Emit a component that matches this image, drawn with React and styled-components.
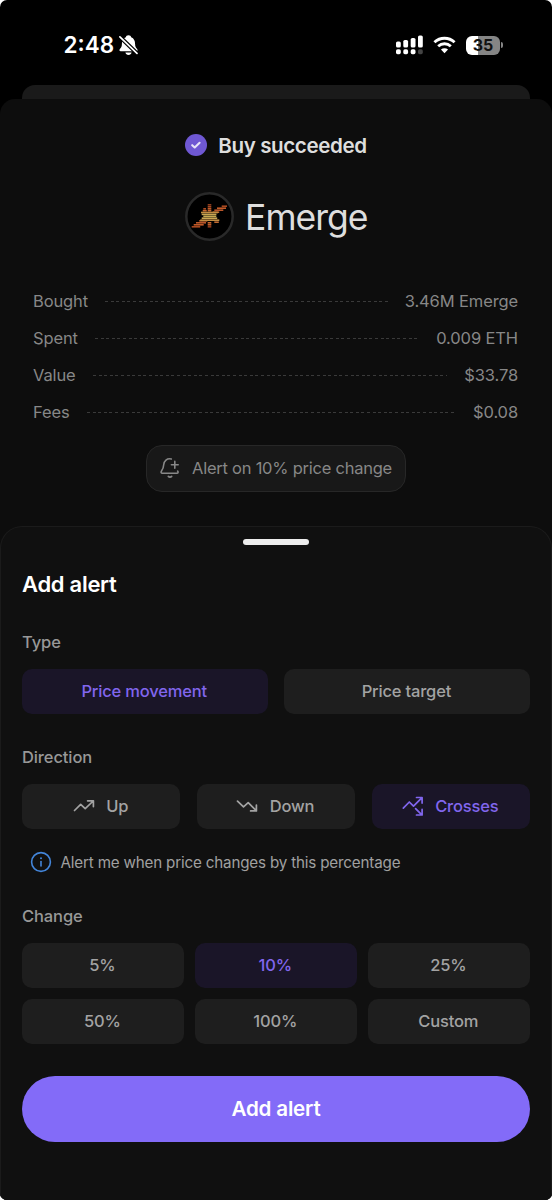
import React from "react";
import styled, { createGlobalStyle } from "styled-components";

const GlobalStyle = createGlobalStyle`
  *, *::before, *::after { box-sizing: border-box; }
  body { margin: 0; background: #fff; font-family: Inter, "Liberation Sans", sans-serif; }
  button { font: inherit; border: 0; padding: 0; margin: 0; }
  svg { display: block; flex: none; }
`;

const Screen = styled.div`
  width: 552px;
  height: 1200px;
  display: flex;
  flex-direction: column;
  overflow: hidden;
  background: #000;
  border-radius: 7px;
`;

const StatusBar = styled.header`
  height: 85px;
  flex: none;
  display: flex;
  justify-content: space-between;
  align-items: center;
  padding: 5px 49px 0 63.5px;
  color: #fff;
`;

const StatusGroup = styled.div`
  display: flex;
  align-items: center;
  gap: ${(p) => p.$gap}px;
`;

const Clock = styled.span`
  font-size: 22.5px;
  font-weight: 600;
  line-height: 28px;
`;

const Battery = styled.span`
  display: flex;
  align-items: center;
  gap: 1px;
`;

const BatteryBody = styled.span`
  width: 34px;
  height: 19px;
  border-radius: 6px;
  background: linear-gradient(90deg, #fff 35%, #858585 35%);
  color: #111;
  font-size: 16px;
  font-weight: 650;
  line-height: 19px;
  text-align: center;
`;

const BatteryTip = styled.span`
  width: 2px;
  height: 6px;
  border-radius: 0 2px 2px 0;
  background: #858585;
`;

const BackSheet = styled.div`
  height: 14px;
  flex: none;
  margin: 0 22px;
  border-radius: 13px 13px 0 0;
  background: #1a1a1a;
`;

const ReceiptSheet = styled.main`
  flex: 1;
  display: flex;
  flex-direction: column;
  align-items: center;
  padding-top: 32px;
  border-radius: 15px 15px 0 0;
  background: #0d0d0d;
`;

const StatusLine = styled.div`
  display: flex;
  align-items: center;
  gap: 11px;
  height: 28px;
  color: #dedede;
  font-size: 20.6px;
  font-weight: 600;
  letter-spacing: -0.4px;
`;

const Token = styled.h1`
  display: flex;
  align-items: center;
  gap: 11.5px;
  height: 50px;
  margin: 32.5px 0 0;
  color: #dedede;
  font-size: 35.5px;
  font-weight: 420;
  letter-spacing: -1px;
`;

const TokenName = styled.span`
  padding-top: 1px;
`;

const Details = styled.dl`
  align-self: stretch;
  margin: 41px 34px 0 33px;
`;

const DetailRow = styled.div`
  display: flex;
  align-items: center;
  gap: 17px;
  height: 37.1px;
  color: #878787;
  font-size: 16.5px;
  line-height: 20px;
  letter-spacing: -0.12px;
`;

const Term = styled.dt``;

const Leader = styled.span`
  flex: 1;
  height: 1px;
  margin-top: 1px;
  background: repeating-linear-gradient(90deg, #3a3a3a 0 3px, transparent 3px 5.6px);
`;

const Amount = styled.dd`
  margin: 0;
`;

const AlertPill = styled.button`
  display: flex;
  align-items: center;
  gap: 11px;
  width: 260px;
  height: 47px;
  margin-top: 14.5px;
  padding: 0 0 1px 12px;
  border: 1.5px solid #272727;
  border-radius: 16px;
  background: #181818;
  color: #878787;
  font-size: 16.5px;
  letter-spacing: -0.24px;
  white-space: nowrap;
`;

const AlertSheet = styled.section`
  align-self: stretch;
  flex: 1;
  margin-top: 34px;
  padding: 12px 21px 0;
  border: 1px solid #1b1b1b;
  border-bottom: 0;
  border-radius: 22px 22px 0 0;
  background: #101010;
`;

const Handle = styled.div`
  width: 66px;
  height: 6px;
  margin: 0 auto;
  border-radius: 3px;
  background: #ededed;
`;

const SheetTitle = styled.h2`
  margin: 25px 0 0;
  color: #fff;
  font-size: 22px;
  font-weight: 600;
  line-height: 28px;
  letter-spacing: -0.28px;
`;

const FieldLabel = styled.h3`
  margin: ${(p) => p.$top}px 0 0;
  color: #989898;
  font-size: 16.5px;
  font-weight: 500;
  line-height: 22px;
  letter-spacing: -0.1px;
`;

const OptionGrid = styled.div`
  display: grid;
  grid-template-columns: repeat(${(p) => p.$columns}, 1fr);
  gap: 11px ${(p) => p.$gap}px;
  margin-top: 15.5px;
`;

const Option = styled.button`
  display: flex;
  align-items: center;
  justify-content: center;
  gap: 11.5px;
  height: 45px;
  padding-right: 1.5px;
  border-radius: 10px;
  background: ${(p) => (p.$active ? "#1a1528" : "#1e1e1e")};
  color: ${(p) => (p.$active ? "#8166ee" : "#a3a3a3")};
  font-size: 16.5px;
  font-weight: ${(p) => (p.$active ? 550 : 520)};
  letter-spacing: -0.18px;
`;

const Hint = styled.p`
  display: flex;
  align-items: center;
  gap: 8.5px;
  height: 22px;
  margin: 22px 0 0 8px;
  color: #a0a0a0;
  font-size: 15.2px;
  letter-spacing: -0.18px;
  white-space: nowrap;
`;

const HintText = styled.span`
  padding-top: 1px;
`;

const SubmitButton = styled.button`
  display: block;
  width: 100%;
  height: 66px;
  margin-top: 32.5px;
  padding-bottom: 1.5px;
  border-radius: 33px;
  background: #836bf8;
  color: #fff;
  font-size: 20.6px;
  font-weight: 600;
  letter-spacing: -0.2px;
`;

const BellOff = () => (
  <svg width="19" height="20" viewBox="0 0 19 20">
    <path d="M9.500.3c-1.600 0-2.500.8-2.700 2C4 3.400 2.900 6 2.900 9c0 2.700-.8 3.800-2 5-.9.900-.5 2.300.8 2.300h15.600c1.300 0 1.700-1.400.8-2.300-1.200-1.200-2-2.300-2-5 0-3-1.100-5.600-3.900-6.700-.2-1.200-1.100-2-2.700-2ZM6.400 17.500h6.200c-.3 1.400-1.500 2.400-3.100 2.400s-2.800-1-3.100-2.400Z" fill="#fff" />
    <path d="M.4 1.300 18.400 18.800" stroke="#000" strokeWidth="4" />
    <path d="M.9 1.800 18 18.300" stroke="#fff" strokeWidth="1.700" strokeLinecap="round" />
  </svg>
);

const Signal = () => (
  <svg width="27" height="20" viewBox="0 0 27 20" fill="#fff">
    <rect x="0" y="6.500" width="4.800" height="6" rx="1.600" />
    <rect x="7.300" y="5" width="4.800" height="7.500" rx="1.600" />
    <rect x="14.700" y="3" width="4.800" height="9.500" rx="1.600" />
    <rect x="22" y=".5" width="4.800" height="12" rx="1.600" />
    <rect x="0" y="14.300" width="4.800" height="4.900" rx="1.600" />
    <rect x="7.300" y="14.300" width="4.800" height="4.900" rx="1.600" />
    <rect x="14.700" y="14.300" width="4.800" height="4.900" rx="1.600" />
    <rect x="22" y="14.300" width="4.800" height="4.900" rx="1.600" fill="#444" />
  </svg>
);

const Wifi = () => (
  <svg width="23" height="18" viewBox="0 0 24 18" fill="none" stroke="#fff" strokeWidth="3">
    <path d="M1.500 6.200C7.500.6 16.500.6 22.500 6.200" />
    <path d="M5.400 10.300c3.800-3.400 9.400-3.400 13.200 0" />
    <path d="M12 17.500 8.300 13.800c2.100-1.800 5.300-1.800 7.400 0Z" fill="#fff" stroke="none" />
  </svg>
);

const SuccessBadge = () => (
  <svg width="22" height="22" viewBox="0 0 22 22">
    <circle cx="11" cy="11" r="11" fill="#6f58d3" />
    <path d="m7.200 11.200 2.500 2.300 4.900-4.700" fill="none" stroke="#e6e2f7" strokeWidth="2.100" strokeLinecap="round" strokeLinejoin="round" />
  </svg>
);

const STRIPES = [
  [36.7, 14.2, 5.3, "#a8481f"], [32, 16.2, 9, "#c25a28"], [29.3, 18.2, 9, "#b9562a"], [27.700, 20.2, 6.500, "#c8682e"],
  [14.3, 28.800, 8, "#c8682e"], [11, 30.800, 10, "#b9562a"], [8.700, 32.800, 10, "#c25a28"], [6.700, 34.800, 8.500, "#a8481f"],
  [22.700, 12.800, 3.600, "#8f3d1d"], [22.700, 14.800, 3.600, "#a8481f"], [22.700, 16.800, 3.600, "#c25a28"],
  [18.300, 16.800, 2.700, "#a8481f"], [17.700, 18.700, 4, "#c8682e"], [22.700, 18.700, 3.600, "#c8682e"],
  [16, 20.500, 17, "#c08c42"], [16.700, 22.400, 14.700, "#c9a653"], [18.300, 24.300, 13, "#c6a952"],
  [16.700, 26.200, 15.500, "#c9a653"], [15.300, 28.200, 19, "#c08c42"],
  [29.300, 30.200, 4.500, "#c06a30"], [22.700, 30.800, 3.600, "#c8682e"],
  [22.700, 32.800, 3.600, "#c25a28"], [22.700, 34.800, 3.600, "#8f3d1d"],
];

const TokenLogo = () => (
  <svg width="49" height="49" viewBox="0 0 49 49">
    <circle cx="24.500" cy="24.500" r="23.200" fill="#000" stroke="#292929" strokeWidth="2.500" />
    {STRIPES.map(([x, y, w, fill], i) => (
      <rect key={i} x={x} y={y - 0.8} width={w} height="1.600" fill={fill} />
    ))}
  </svg>
);

const BellPlus = () => (
  <svg width="22" height="22" viewBox="0 0 22 22" fill="none" stroke="currentColor" strokeWidth="1.600" strokeLinecap="round" strokeLinejoin="round">
    <path d="M12.300 2c-4.400-.9-7.300 1.900-7.600 5.800-.2 3.400-.7 4.300-2.200 6.300-.8 1.100-.5 2.200.8 2.200h14.600c1.300 0 1.500-1.200.7-2.200" />
    <path d="M15.800 4.400v6.800M12.400 7.800h6.800" />
    <path d="M9.300 19.400c.9 1 2.500 1 3.400 0" />
  </svg>
);

const TrendUp = () => (
  <svg width="22" height="22" viewBox="0 0 22 22" fill="none" stroke="currentColor" strokeWidth="1.700" strokeLinecap="round" strokeLinejoin="round">
    <path d="m1.500 15.500 6.200-6.200 4.500 4.300L20.200 6M14.600 5.800h5.800v5.800" />
  </svg>
);

const TrendDown = () => (
  <svg width="22" height="22" viewBox="0 0 22 22" fill="none" stroke="currentColor" strokeWidth="1.700" strokeLinecap="round" strokeLinejoin="round">
    <path d="m1.500 6.200 6 5.700 4.700-4.200 8 7.900M14.600 15.900h5.800v-5.800" />
  </svg>
);

const Cross = () => (
  <svg width="22" height="22" viewBox="0 0 22 22" fill="none" stroke="currentColor" strokeWidth="1.700" strokeLinecap="round" strokeLinejoin="round">
    <path d="m1.300 13.200 6-6.200 4.200 4.200 8-8M14.500 2.500h5.600v5.600M13.600 13.700l6 6M14.500 20h5.600v-5.600" />
  </svg>
);

const Info = () => (
  <svg width="22" height="22" viewBox="0 0 22 22" fill="none" stroke="#4385d9" strokeLinecap="round">
    <circle cx="11" cy="11" r="9.400" strokeWidth="1.600" />
    <path d="M11 10.500v4.500" strokeWidth="1.600" />
    <circle cx="11" cy="7.300" r="1" fill="#4385d9" stroke="none" />
  </svg>
);

const RECEIPT = [
  ["Bought", "3.46M Emerge"],
  ["Spent", "0.009 ETH"],
  ["Value", "$33.78"],
  ["Fees", "$0.08"],
];

const CHANGES = ["5%", "10%", "25%", "50%", "100%", "Custom"];

export default function App() {
  return (
    <>
      <GlobalStyle />
      <Screen>
        <StatusBar>
          <StatusGroup $gap={5}>
            <Clock>2:48</Clock>
            <BellOff />
          </StatusGroup>
          <StatusGroup $gap={10}>
            <Signal />
            <Wifi />
            <Battery>
              <BatteryBody>35</BatteryBody>
              <BatteryTip />
            </Battery>
          </StatusGroup>
        </StatusBar>
        <BackSheet />
        <ReceiptSheet>
          <StatusLine>
            <SuccessBadge />
            Buy succeeded
          </StatusLine>
          <Token>
            <TokenLogo />
            <TokenName>Emerge</TokenName>
          </Token>
          <Details>
            {RECEIPT.map(([term, amount]) => (
              <DetailRow key={term}>
                <Term>{term}</Term>
                <Leader />
                <Amount>{amount}</Amount>
              </DetailRow>
            ))}
          </Details>
          <AlertPill>
            <BellPlus />
            Alert on 10% price change
          </AlertPill>
          <AlertSheet>
            <Handle />
            <SheetTitle>Add alert</SheetTitle>
            <FieldLabel $top={33}>Type</FieldLabel>
            <OptionGrid $columns={2} $gap={16.5}>
              <Option $active>Price movement</Option>
              <Option>Price target</Option>
            </OptionGrid>
            <FieldLabel $top={32.5}>Direction</FieldLabel>
            <OptionGrid $columns={3} $gap={16.5}>
              <Option><TrendUp />Up</Option>
              <Option><TrendDown />Down</Option>
              <Option $active><Cross />Crosses</Option>
            </OptionGrid>
            <Hint>
              <Info />
              <HintText>Alert me when price changes by this percentage</HintText>
            </Hint>
            <FieldLabel $top={32.5}>Change</FieldLabel>
            <OptionGrid $columns={3} $gap={11}>
              {CHANGES.map((change) => (
                <Option key={change} $active={change === "10%"}>{change}</Option>
              ))}
            </OptionGrid>
            <SubmitButton>Add alert</SubmitButton>
          </AlertSheet>
        </ReceiptSheet>
      </Screen>
    </>
  );
}
